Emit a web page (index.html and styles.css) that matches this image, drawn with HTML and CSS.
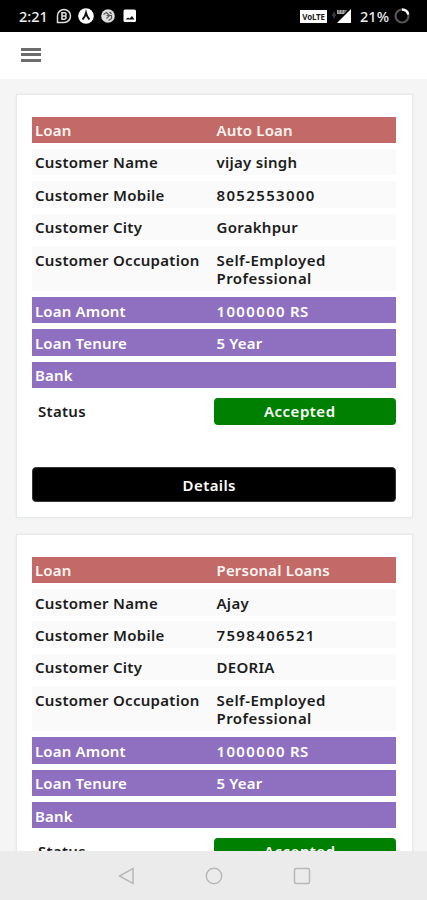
FILE: index.html
```
<!DOCTYPE html>
<html lang="en">
<head>
    <meta charset="UTF-8">
    <title>Loans</title>
    <meta name="viewport" content="width=device-width, initial-scale=1">
    <link rel="stylesheet" href="styles.css">
</head>
<body>
    <div class="statusbar">
        <span class="time">2:21</span>
        <svg class="notif" width="82" height="18" viewBox="0 0 82 18">
            <path d="M2.500 15.500V9A6.500 6.500 0 1 1 9 15.500z" fill="none" stroke="#ddd" stroke-width="1.500"/>
            <path d="M7 5.800h2.500a1.600 1.600 0 0 1 0 3.200 1.600 1.600 0 0 1 0 3.200H7zM7 9h2.500" fill="none" stroke="#ddd" stroke-width="1.600"/>
            <circle cx="31" cy="9" r="7.800" fill="#fff"/>
            <path d="M27.500 12.500q2.300-2 3.500-6.500q1.200 4.500 3.500 6.500" fill="none" stroke="#111" stroke-width="2"/>
            <circle cx="53" cy="9" r="6.800" fill="#ddd"/>
            <path d="M48.500 7.500l3-2 3 3-3 3M51.500 8.500h5v3l-3 2M54.500 5l2 2" fill="none" stroke="#555" stroke-width="1.200"/>
            <rect x="68.500" y="2.500" width="12.500" height="12.500" rx="1.500" fill="#fff"/>
            <path d="M70.500 12.500l2.500-2 1.500 1 2.500-2.500 2.500 3.500z" fill="#111"/>
        </svg>
        <div class="signals">
            <span class="volte">VoLTE</span>
            <svg width="21" height="16" viewBox="0 0 21 16">
                <path d="M3 4v6M1 7h4" stroke="#333" stroke-width="2"/>
                <path d="M20 1v14H6z" fill="#fff"/>
                <path d="M6 2h10l-3 4H6z" fill="#aaa"/>
                <path d="M8 2v3M11 2v3M14 2v3" stroke="#444"/>
            </svg>
            <span class="percent">21%</span>
            <svg width="18" height="18" viewBox="0 0 18 18">
                <circle cx="9" cy="9" r="6.500" fill="none" stroke="#555" stroke-width="2.200"/>
                <path d="M9 2.500a6.500 6.500 0 0 1 6.300 5" fill="none" stroke="#fff" stroke-width="2.400"/>
            </svg>
        </div>
    </div>
    <header>
        <div class="menu"><span></span><span></span><span></span></div>
    </header>
    <main>
        <div class="card">
            <div class="row loan"><span>Loan</span><span>Auto Loan</span></div>
            <div class="row"><span>Customer Name</span><span>vijay singh</span></div>
            <div class="row"><span>Customer Mobile</span><span class="number">8052553000</span></div>
            <div class="row"><span>Customer City</span><span>Gorakhpur</span></div>
            <div class="row"><span>Customer Occupation</span><span class="job">Self-Employed Professional</span></div>
            <div class="row amount"><span>Loan Amont</span><span><span class="number">1000000</span> RS</span></div>
            <div class="row amount"><span>Loan Tenure</span><span>5 Year</span></div>
            <div class="row amount"><span>Bank</span><span></span></div>
            <div class="status"><span>Status</span><span class="badge">Accepted</span></div>
            <button class="details">Details</button>
        </div>
        <div class="card">
            <div class="row loan"><span>Loan</span><span>Personal Loans</span></div>
            <div class="row"><span>Customer Name</span><span>Ajay</span></div>
            <div class="row"><span>Customer Mobile</span><span class="number">7598406521</span></div>
            <div class="row"><span>Customer City</span><span>DEORIA</span></div>
            <div class="row"><span>Customer Occupation</span><span class="job">Self-Employed Professional</span></div>
            <div class="row amount"><span>Loan Amont</span><span><span class="number">1000000</span> RS</span></div>
            <div class="row amount"><span>Loan Tenure</span><span>5 Year</span></div>
            <div class="row amount"><span>Bank</span><span></span></div>
            <div class="status"><span>Status</span><span class="badge">Accepted</span></div>
        </div>
    </main>
    <nav>
        <svg width="18" height="18" viewBox="0 0 18 18"><path d="M16 1.500v15L2.500 9z"/></svg>
        <svg width="18" height="18" viewBox="0 0 18 18"><circle cx="9" cy="9" r="7.700"/></svg>
        <svg width="18" height="18" viewBox="0 0 18 18"><rect x="1.500" y="1.500" width="15" height="15" rx="1.500"/></svg>
    </nav>
</body>
</html>
```
FILE: styles.css
```
* { box-sizing: border-box; }
body { font-family: "Noto Sans", sans-serif; font-size: 15px; font-weight: 600; letter-spacing: 0.28px; margin: 0; height: 900px; display: flex; flex-direction: column; overflow: hidden; background: #f5f5f5; color: #1c1c1c; }
.statusbar { flex: none; height: 32px; background: #000; color: #eee; display: flex; align-items: center; padding: 0 16px 0 19px; font-weight: 500; font-size: 14.5px; letter-spacing: 0; }
.time { width: 36px; }
.signals { margin-left: auto; display: flex; align-items: center; }
.volte { width: 27px; height: 13px; margin-right: 4px; background: #fff; color: #222; font-size: 8px; line-height: 13px; font-weight: 700; letter-spacing: -0.2px; text-align: center; }
.percent { margin: 0 4px 0 8px; }
header { flex: none; height: 46.5px; background: #fff; padding: 15.5px 21px; }
.menu { width: 20px; display: flex; flex-direction: column; gap: 2.5px; }
.menu span { height: 3px; background: #6c6c6c; }
main { flex: 1; min-height: 0; overflow: hidden; padding: 15.5px 14.5px 0 15.5px; }
.card { height: 424.2px; margin-bottom: 16px; padding: 21.5px 15.5px 0 15px; background: #fff; border: 1.5px solid #e8eaea; box-shadow: 0 0 2px #e4e6e6; }
.row { display: grid; grid-template-columns: 181.5px 1fr; min-height: 26.5px; margin-bottom: 5.9px; padding: 4.6px 0 3.4px 3.5px; background: #fafafa; line-height: 18.5px; }
.loan { background: #c36a68; color: #fff5f0; letter-spacing: 0.18px; }
.amount { background: #8f70c0; color: #fff; letter-spacing: 0.18px; }
.number { letter-spacing: 1.35px; }
.job { letter-spacing: 0.45px; padding-right: 40px; }
.status { display: grid; grid-template-columns: 182px 1fr; height: 26.5px; margin-top: 9.5px; line-height: 27px; }
.status span:first-child { padding-left: 6.5px; }
.badge { background: #008000; color: #fff; border-radius: 4px; text-align: center; padding-right: 10px; letter-spacing: 0.5px; }
.details { display: block; width: 100%; height: 35.5px; margin-top: 42.5px; padding: 1px 9px 0 0; border: 1px solid #333; border-radius: 4px; background: #000; color: #fff; font: inherit; letter-spacing: 0.4px; }
nav { flex: none; height: 49px; background: #ebebeb; display: flex; justify-content: center; gap: 70px; align-items: center; }
nav svg { fill: none; stroke: #b8b8b8; stroke-width: 1.5; }
```
